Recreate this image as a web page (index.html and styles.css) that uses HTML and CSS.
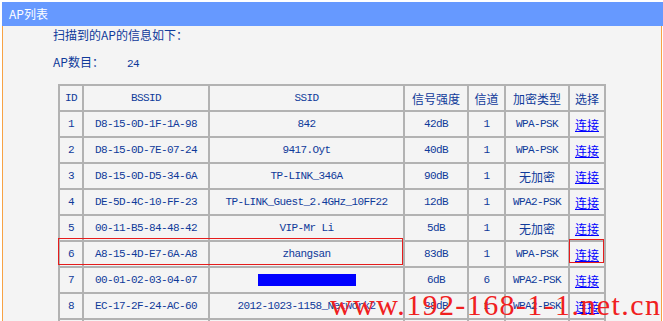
FILE: index.html
```html
<!DOCTYPE html>
<html lang="zh-CN">
<head>
  <meta charset="UTF-8">
  <meta name="viewport" content="width=device-width, initial-scale=1.0">
  <title>AP列表</title>
  <link rel="stylesheet" href="styles.css">
</head>
<body>
  <div class="panel">
    <div class="panel-title">AP列表</div>
    <div class="panel-body">
      <p class="intro">扫描到的AP的信息如下：</p>
      <p class="count">AP数目：<span class="count-num">24</span></p>

      <div class="table-wrap">
        <table class="ap-table">
          <colgroup>
            <col class="c-id">
            <col class="c-bssid">
            <col class="c-ssid">
            <col class="c-signal">
            <col class="c-channel">
            <col class="c-enc">
            <col class="c-pick">
          </colgroup>
          <thead>
            <tr>
              <th class="en">ID</th>
              <th class="en">BSSID</th>
              <th class="en">SSID</th>
              <th>信号强度</th>
              <th>信道</th>
              <th>加密类型</th>
              <th>选择</th>
            </tr>
          </thead>
          <tbody>
            <tr><td>1</td><td>D8-15-0D-1F-1A-98</td><td>842</td><td>42dB</td><td>1</td><td>WPA-PSK</td><td><a href="#" class="cn">连接</a></td></tr>
            <tr><td>2</td><td>D8-15-0D-7E-07-24</td><td>9417.Oyt</td><td>40dB</td><td>1</td><td>WPA-PSK</td><td><a href="#" class="cn">连接</a></td></tr>
            <tr><td>3</td><td>D8-15-0D-D5-34-6A</td><td>TP-LINK_346A</td><td>90dB</td><td>1</td><td><span class="cn">无加密</span></td><td><a href="#" class="cn">连接</a></td></tr>
            <tr><td>4</td><td>DE-5D-4C-10-FF-23</td><td>TP-LINK_Guest_2.4GHz_10FF22</td><td>12dB</td><td>1</td><td>WPA2-PSK</td><td><a href="#" class="cn">连接</a></td></tr>
            <tr><td>5</td><td>00-11-B5-84-48-42</td><td>VIP-Mr Li</td><td>5dB</td><td>1</td><td><span class="cn">无加密</span></td><td><a href="#" class="cn">连接</a></td></tr>
            <tr><td>6</td><td>A8-15-4D-E7-6A-A8</td><td>zhangsan</td><td>83dB</td><td>1</td><td>WPA-PSK</td><td><a href="#" class="cn">连接</a></td></tr>
            <tr><td>7</td><td>00-01-02-03-04-07</td><td><span class="masked"></span></td><td>6dB</td><td>6</td><td>WPA2-PSK</td><td><a href="#" class="cn">连接</a></td></tr>
            <tr><td>8</td><td>EC-17-2F-24-AC-60</td><td>2012-1023-1158_Network2</td><td>38dB</td><td>1</td><td>WPA2-PSK</td><td><a href="#" class="cn">连接</a></td></tr>
            <tr class="row-blank"><td></td><td></td><td></td><td></td><td></td><td></td><td></td></tr>
          </tbody>
        </table>

        <!-- annotation boxes -->
        <div class="mark mark-row"></div>
        <div class="mark mark-link"></div>
      </div>

      <div class="watermark">www.192-168-1-1.net.cn</div>
    </div>
  </div>
</body>
</html>
```

FILE: styles.css
```css
* {
  margin: 0;
  padding: 0;
  box-sizing: border-box;
}

body {
  background: #ffffff;
  font-family: "Noto Sans CJK SC", sans-serif;
  font-size: 12px;
  color: #0f3a9a;
  overflow: hidden;
}

.panel {
  margin-left: 2px;
  padding-top: 2px;
}

.panel-title {
  height: 24px;
  line-height: 23px;
  padding-left: 7px;
  background: #6699ff;
  color: #ffffff;
  font-size: 12px;
}

.panel-body {
  position: relative;
  margin-right: 1px;
  min-height: 320px;
  background: #f4f4f4;
  border-left: 1px solid #f7a244;
  border-right: 1px solid #f7a244;
  padding-left: 50px;
}

.intro,
.count {
  line-height: 18px;
}

.count {
  margin-top: 9px;
}

.count-num {
  margin-left: 23px;
  font-family: "Liberation Mono", monospace;
  font-size: 11px;
  letter-spacing: -0.6px;
}

.table-wrap {
  position: relative;
  margin-top: 11px;
  margin-left: 5px;
  width: 548px;
}

.ap-table {
  width: 548px;
  table-layout: fixed;
  border-collapse: collapse;
}

.c-id { width: 24px; }
.c-bssid { width: 126px; }
.c-ssid { width: 195px; }
.c-signal { width: 64px; }
.c-channel { width: 37px; }
.c-enc { width: 64px; }
.c-pick { width: 36px; }

.ap-table th,
.ap-table td {
  height: 26px;
  border: 2px solid #b2b2b2;
  text-align: center;
  vertical-align: middle;
  white-space: nowrap;
  overflow: visible;
}

.ap-table th {
  font-weight: normal;
  font-size: 12px;
}

.ap-table th.en,
.ap-table td {
  font-family: "Liberation Mono", "Noto Sans CJK SC", monospace;
  font-size: 11px;
  letter-spacing: -0.6px;
}

.ap-table .cn {
  font-family: "Noto Sans CJK SC", sans-serif;
  font-size: 12px;
  letter-spacing: 0;
}

.ap-table a {
  color: #0000ff;
  text-decoration: underline;
}

.masked {
  display: inline-block;
  width: 98px;
  height: 12px;
  background: #0000ff;
  vertical-align: middle;
}

.mark {
  position: absolute;
  border: 1px solid #e51c1c;
}

.mark-row {
  left: 0;
  top: 154px;
  width: 345px;
  height: 27px;
}

.mark-link {
  left: 511px;
  top: 155px;
  width: 35px;
  height: 24px;
}

.watermark {
  position: absolute;
  left: 327px;
  top: 264px;
  font-family: "Liberation Serif", serif;
  font-size: 30px;
  line-height: 30px;
  letter-spacing: 1.4px;
  color: #f02020;
  white-space: nowrap;
}
```
